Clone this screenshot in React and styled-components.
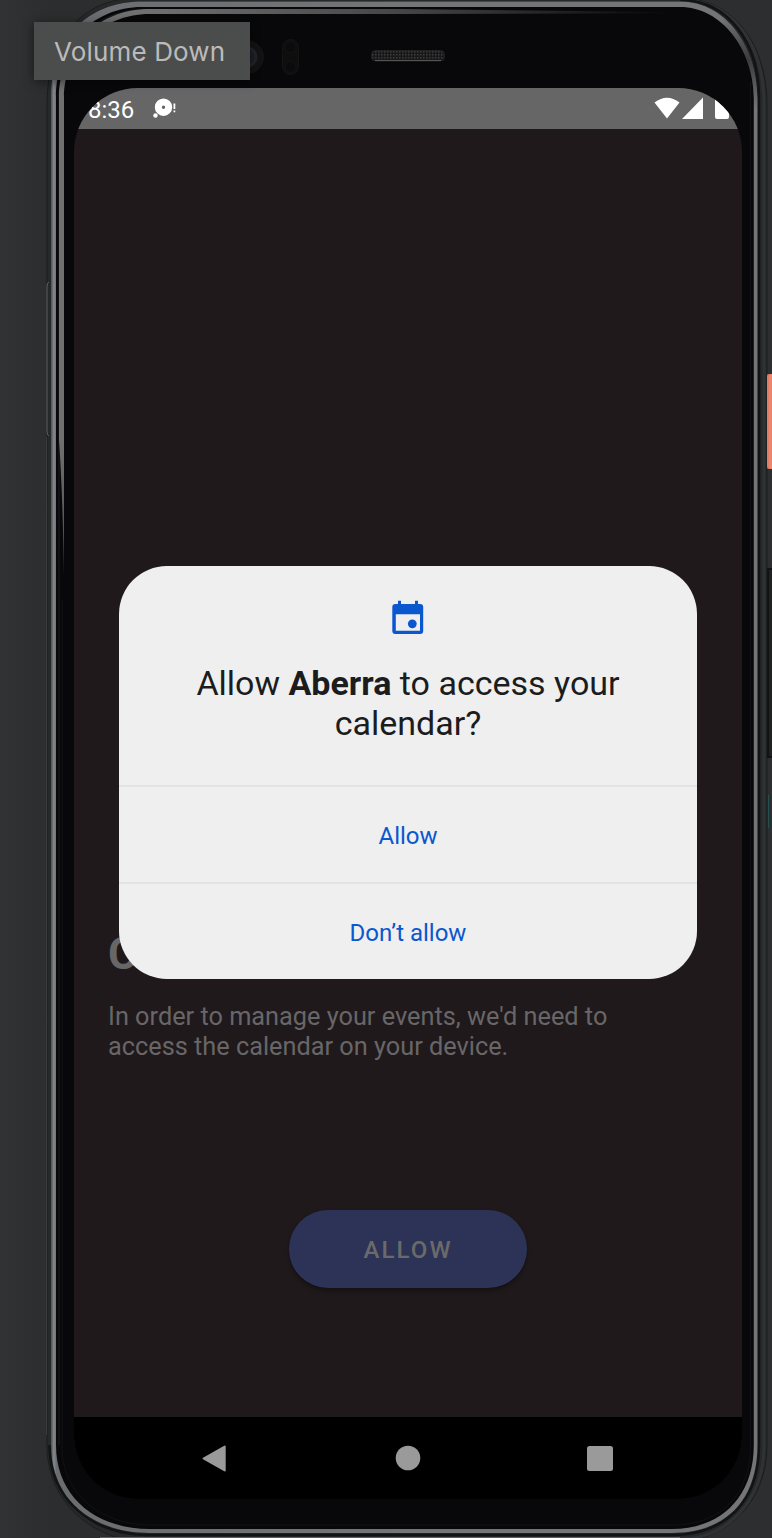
import React from "react";
import styled, { createGlobalStyle } from "styled-components";

const GlobalStyle = createGlobalStyle`
  * { box-sizing: border-box; }
  body { margin: 0; background: #2e3032; }
`;

const Stage = styled.main`
  position: relative;
  width: 772px;
  height: 1538px;
  overflow: hidden;
  padding: 88px 30px 39px 74px;
  background: linear-gradient(90deg, #303234 0, #2b2d2e 50px, #2c2e30 100%);
  font-family: Roboto, "Liberation Sans", sans-serif;
`;

const Hardware = styled.svg`
  position: absolute;
  inset: 0;
`;

const Screen = styled.section`
  position: relative;
  width: 668px;
  height: 1411px;
  display: flex;
  flex-direction: column;
  overflow: hidden;
  border-radius: 64px;
  background: #1f191c;
`;

const StatusBar = styled.header`
  height: 41px;
  flex: none;
  display: flex;
  align-items: center;
  justify-content: space-between;
  background: #666;
  color: #fff;
`;

const StatusGroup = styled.div`
  display: flex;
  align-items: center;
`;

const Clock = styled.span`
  width: 64px;
  margin-left: 14px;
  padding-top: 2px;
  font-size: 24px;
  line-height: 28px;
`;

const AppBody = styled.div`
  flex: 1;
  display: flex;
  flex-direction: column;
  padding: 797px 34px 0;
  color: #686667;
`;

const AppTitle = styled.h1`
  margin: 0;
  font-size: 45px;
  line-height: 56px;
  font-weight: 700;
`;

const AppText = styled.p`
  margin: 20px 0 0;
  font-size: 25.3px;
  line-height: 30px;
  white-space: pre;
`;

const PrimaryButton = styled.button`
  align-self: center;
  width: 238px;
  height: 78px;
  margin-top: 148px;
  padding: 2px 0 0;
  border: 0;
  border-radius: 39px;
  background: #2d3356;
  box-shadow: 0 3px 4px rgba(0, 0, 0, 0.35);
  color: #6a6a6a;
  font: 500 24px/28px Roboto, sans-serif;
  letter-spacing: 2.1px;
`;

const NavBar = styled.nav`
  height: 82px;
  flex: none;
  display: flex;
  justify-content: center;
  gap: 164px;
  padding-top: 27px;
  background: #000;
`;

const Dialog = styled.section`
  position: absolute;
  top: 478px;
  left: 45px;
  width: 578px;
  height: 413px;
  display: flex;
  flex-direction: column;
  overflow: hidden;
  border-radius: 48px;
  background: #efefef;
`;

const DialogHead = styled.div`
  height: 219px;
  flex: none;
  display: flex;
  flex-direction: column;
  align-items: center;
  padding-top: 33px;
`;

const DialogTitle = styled.h2`
  margin: 29px 0 0;
  color: #1b1c1d;
  font-size: 34px;
  line-height: 39.5px;
  font-weight: 400;
  text-align: center;
  white-space: pre-line;
`;

const DialogAction = styled.button`
  flex: 1;
  padding: 2px 0 0;
  border: 0;
  border-top: 2px solid #e3e3e3;
  background: transparent;
  color: #0b57d0;
  font: 400 24px/28px Roboto, sans-serif;
`;

const Tooltip = styled.div`
  position: absolute;
  left: 34px;
  top: 22px;
  width: 216px;
  height: 58px;
  padding-left: 20px;
  background: #4b4d4c;
  box-shadow: 0 2px 10px rgba(0, 0, 0, 0.45);
  color: #bbb;
  font: 400 26px/59px Inter, sans-serif;
  letter-spacing: 0.15px;
  white-space: nowrap;
`;

const rimOuter =
  "M51 98C51 40 86 1.5 142 1.5H680C727 1.5 757.5 48 757.5 98V1445C757.5 1502 724 1533 672 1533H150C93 1533 51 1500 51 1445Z";
const rimInner =
  "M56 98C56 46 92 7 142 7H680C722 7 753.800 50 753.800 98V1445C753.800 1498 720 1529 672 1529H150C97 1529 56 1498 56 1445Z";

function DeviceFrame() {
  return (
    <Hardware width="772" height="1538" viewBox="0 0 772 1538" fill="none">
      <defs>
        <linearGradient id="rim" x1="51" x2="758" y1="0" y2="0" gradientUnits="userSpaceOnUse">
          <stop offset="0" stopColor="#4e5153" />
          <stop offset=".004" stopColor="#85888c" />
          <stop offset=".008" stopColor="#6a6d70" />
          <stop offset=".5" stopColor="#747577" />
          <stop offset="1" stopColor="#747576" />
        </linearGradient>
        <linearGradient id="topFade" x1="150" x2="670" y1="0" y2="0" gradientUnits="userSpaceOnUse">
          <stop offset="0" stopColor="#707070" />
          <stop offset=".5" stopColor="#444" />
          <stop offset="1" stopColor="#08080a" />
        </linearGradient>
        <linearGradient id="leftFade" x1="0" x2="0" y1="20" y2="620" gradientUnits="userSpaceOnUse">
          <stop offset="0" stopColor="#707070" />
          <stop offset=".7" stopColor="#707070" />
          <stop offset="1" stopColor="#3a3a3a" />
        </linearGradient>
        <radialGradient id="cornerShade" cx="748" cy="60" r="50" gradientUnits="userSpaceOnUse">
          <stop offset="0" stopColor="#000" stopOpacity=".5" />
          <stop offset="1" stopColor="#000" stopOpacity="0" />
        </radialGradient>
        <pattern id="mesh" width="3" height="3" patternUnits="userSpaceOnUse">
          <rect width="3" height="3" fill="#191919" />
          <rect width="1.5" height="1.5" fill="#3c3c3c" />
        </pattern>
      </defs>
      <path
        d="M47 105C47 36 84 -2 138 -2H680C734 -2 767 45 767 105V1445C767 1500 730 1541 672 1543H150C92 1541 47 1502 47 1445Z"
        fill="#262829"
        stroke="#1c1d1e"
      />
      <path d="M680 0C734 0 764 45 764 105V1445C764 1500 728 1539 680 1539" stroke="#2f3335" strokeWidth="3" />
      <path d="M680 0C730 0 759 45 759 98V1445C759 1503 724 1535 672 1535H150C92 1535 49.500 1500 49.500 1445" stroke="#121314" strokeWidth="2.500" />
      <path d={rimOuter} fill="#08080a" />
      <path d={rimOuter + rimInner} fill="url(#rim)" fillRule="evenodd" />
      <path d={rimOuter + rimInner} fill="url(#cornerShade)" fillRule="evenodd" />
      <path d="M59 1445V98C59 48 95 9.500 144 9.500" stroke="#1b1c1d" />
      <path
        d="M59 98C59 50 95 9 150 9V14C100 14 64 52 64 98V575Q62.500 490 59 440Z"
        fill="url(#leftFade)"
      />
      <path d="M150 9H400L670 12V13.200L400 14H150Z" fill="url(#topFade)" />
      <path d="M750.500 82V1447C750.500 1492 722 1525 674 1525H150C102 1525 62 1495 62 1447V600" stroke="#121214" />
      <path d="M100 1537.500H680" stroke="#5c5d5e" />
      <path d="M49 282Q47 282 47 287V431Q47 436 49 436" stroke="#606264" />
      <path d="M46.500 437V1435" stroke="#3a3b3d" />
      <path d="M772 374H770Q767 374 767 377V466Q767 469 770 469H772Z" fill="#ee846e" />
      <path d="M768 374V469" stroke="#d07460" />
      <path d="M773 569H768V757H773" fill="#202222" stroke="#111213" strokeWidth="2" />
      <path d="M768.500 795V828" stroke="#245052" />
      <circle cx="247" cy="57" r="17" fill="#131314" />
      <circle cx="247" cy="57" r="9" fill="#1d1c2a" stroke="#242427" strokeWidth="3" />
      <rect x="282.500" y="39.500" width="16" height="35" rx="8" fill="#0e0e0f" stroke="#141415" />
      <circle cx="290.500" cy="47" r="5.500" fill="#0b0b0c" stroke="#141415" />
      <circle cx="290.500" cy="67" r="5.500" fill="#0b0b0c" stroke="#141415" />
      <rect x="371.500" y="50.500" width="73" height="10.500" rx="4" fill="url(#mesh)" stroke="#202020" />
      <path d="M375 60.500H441" stroke="#555" />
    </Hardware>
  );
}

function NotificationIcon() {
  return (
    <svg width="26" height="24" viewBox="0 0 26 24" fill="#fff">
      <path fillRule="evenodd" d="M11.500 1.500a8.700 8.700 0 1 1 0 17.400a8.700 8.700 0 0 1 0-17.400ZM11.500 8.600a1.700 1.700 0 1 0 0 3.400a1.700 1.700 0 0 0 0-3.400Z" />
      <circle cx="3.500" cy="18.500" r="2.200" />
      <path d="M21.500 6.500h1.800v5.500h-1.800zM21.500 13.500h1.800v1.800h-1.800z" />
    </svg>
  );
}

function SignalIcons() {
  return (
    <svg width="90" height="41" viewBox="652 88 90 41" fill="#fff">
      <path d="M654.500 102.500Q667 93 679.500 102.500L667 118.500Z" />
      <path d="M682 119H703V97.500Z" />
      <path d="M715 96H729V117Q729 119 727 119H717Q715 119 715 117Z" />
    </svg>
  );
}

function CalendarIcon() {
  return (
    <svg width="34" height="36" viewBox="0 0 34 36" fill="#0b57d0">
      <path fillRule="evenodd" d="M7 1.800h3v3.300h14V1.800h3v3.300h2.200a3 3 0 0 1 3 3v24a3 3 0 0 1-3 3H4.300a3 3 0 0 1-3-3v-24a3 3 0 0 1 3-3H7ZM4.800 15.300v16.500h24.200V15.300Z" />
      <circle cx="21.300" cy="24.800" r="4.400" />
    </svg>
  );
}

export default function App() {
  return (
    <>
      <GlobalStyle />
      <Stage>
        <DeviceFrame />
        <Screen>
          <StatusBar>
            <StatusGroup>
              <Clock>8:36</Clock>
              <NotificationIcon />
            </StatusGroup>
            <SignalIcons />
          </StatusBar>
          <AppBody>
            <AppTitle>C</AppTitle>
            <AppText>{"In order to manage your events, we'd need to\naccess the calendar on your device."}</AppText>
            <PrimaryButton>ALLOW</PrimaryButton>
          </AppBody>
          <NavBar>
            <svg width="28" height="30" viewBox="0 0 28 30" fill="#9a9a9a" stroke="#9a9a9a" strokeWidth="2" strokeLinejoin="round">
              <path d="M22.700 2.500V26.500L1.500 14.500Z" />
            </svg>
            <svg width="28" height="30" viewBox="0 0 28 30">
              <circle cx="14" cy="14" r="12.300" fill="#9a9a9a" />
            </svg>
            <svg width="28" height="30" viewBox="0 0 28 30">
              <rect x="1" y="2" width="26" height="25" rx="2.500" fill="#9a9a9a" />
            </svg>
          </NavBar>
          <Dialog>
            <DialogHead>
              <CalendarIcon />
              <DialogTitle>
                Allow <b>Aberra</b> to access your{"\n"}calendar?
              </DialogTitle>
            </DialogHead>
            <DialogAction>Allow</DialogAction>
            <DialogAction>Don’t allow</DialogAction>
          </Dialog>
        </Screen>
        <Tooltip>Volume Down</Tooltip>
      </Stage>
    </>
  );
}
